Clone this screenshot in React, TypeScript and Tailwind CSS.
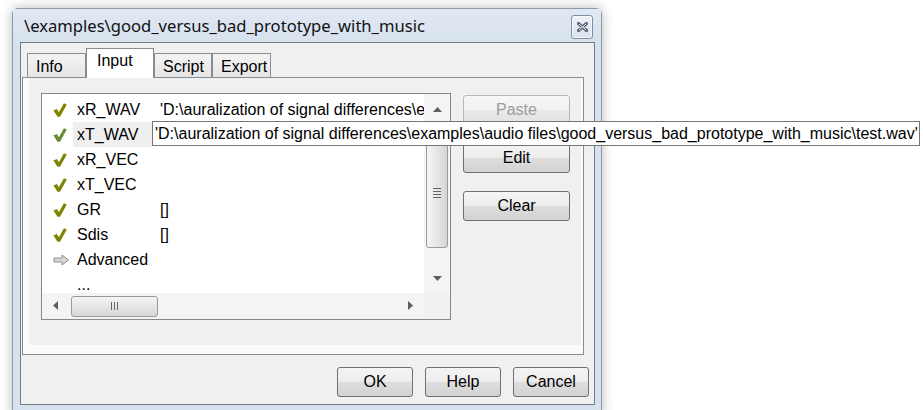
import React from "react";

type Row = {
  icon: "check" | "checkHover" | "arrow" | "none";
  label: string;
  value?: string;
  hover?: boolean;
};

const rows: Row[] = [
  { icon: "check", label: "xR_WAV", value: "'D:\\auralization of signal differences\\examples\\audio files\\good_versus_bad_prototype_with_music\\reference.wav'" },
  { icon: "checkHover", label: "xT_WAV", value: "'D:\\auralization of signal differences\\examples\\audio files\\good_versus_bad_prototype_with_music\\test.wav'", hover: true },
  { icon: "check", label: "xR_VEC" },
  { icon: "check", label: "xT_VEC" },
  { icon: "check", label: "GR", value: "[]" },
  { icon: "check", label: "Sdis", value: "[]" },
  { icon: "arrow", label: "Advanced" },
  { icon: "none", label: "..." },
];

function CheckMark({ color }: { color: string }) {
  return (
    <svg width="14" height="14" viewBox="0 0 14 14">
      <path d="M0.4 7.6 L3.9 6.1 L5.9 9.2 L10.9 0.3 L13.8 1.4 L7 13.7 L4.5 13.8 Z" fill={color} />
    </svg>
  );
}

function OutlineArrow() {
  return (
    <svg width="17" height="12" viewBox="0 0 17 12">
      <path d="M1 4 H9 V1 L15.5 6 L9 11 V8 H1 Z" fill="#d6d6d6" stroke="#8e8e8e" strokeWidth="1" strokeLinejoin="round" />
    </svg>
  );
}

function Tri({ dir }: { dir: "up" | "down" | "left" | "right" }) {
  if (dir === "up")
    return (
      <svg width="9" height="5" viewBox="0 0 9 5">
        <polygon points="0,5 4.5,0 9,5" fill="#5f5f5f" />
      </svg>
    );
  if (dir === "down")
    return (
      <svg width="9" height="5" viewBox="0 0 9 5">
        <polygon points="0,0 4.5,5 9,0" fill="#5f5f5f" />
      </svg>
    );
  if (dir === "left")
    return (
      <svg width="5" height="9" viewBox="0 0 5 9">
        <polygon points="5,0 0,4.5 5,9" fill="#5f5f5f" />
      </svg>
    );
  return (
    <svg width="5" height="9" viewBox="0 0 5 9">
      <polygon points="0,0 5,4.5 0,9" fill="#5f5f5f" />
    </svg>
  );
}

function RowIcon({ kind }: { kind: Row["icon"] }) {
  if (kind === "check") return <CheckMark color="#7f8400" />;
  if (kind === "checkHover") return <CheckMark color="#6a8c36" />;
  if (kind === "arrow") return <OutlineArrow />;
  return null;
}

function Button({
  label,
  disabled,
  wide,
}: {
  label: string;
  disabled?: boolean;
  wide?: boolean;
}) {
  return (
    <div
      className={
        "flex h-[30px] items-center justify-center rounded-[3px] border text-[16px] " +
        (wide ? "w-[107px] " : "w-[76px] ") +
        (disabled
          ? "border-[#b5b9bd] bg-[linear-gradient(#f6f6f6,#f1f1f1_50%,#e9e9e9_50%,#e2e2e2)] text-[#9c9c9c]"
          : "border-[#707070] bg-[linear-gradient(#f4f4f4,#ececec_50%,#dedede_50%,#d2d2d2)] text-black")
      }
    >
      {label}
    </div>
  );
}

function Tab({ label, selected, width }: { label: string; selected?: boolean; width: string }) {
  return (
    <div
      className={
        "flex items-start border-x border-t border-[#898c95] " +
        width +
        (selected
          ? " relative z-10 -mb-px h-[30px] bg-white pl-[10px] pt-[3px]"
          : " h-[24px] bg-[linear-gradient(#f3f3f3,#e6e6e6)] pl-[8px] pt-[4px]")
      }
    >
      <span className="text-[16px] leading-[18px] text-black">{label}</span>
    </div>
  );
}

function VScrollBar() {
  return (
    <div className="flex h-full w-[26px] flex-col bg-[#f4f4f4]">
      <div className="flex h-[27px] items-center justify-center pt-[3px]">
        <Tri dir="up" />
      </div>
      <div className="flex-1 px-[2px] pt-[4px]">
        <div className="flex h-[123px] flex-col items-center justify-center gap-[2px] rounded-[3px] border border-[#9a9a9a] bg-[linear-gradient(90deg,#f5f5f5,#e6e6e6_50%,#d6d6d6)] pt-[12px]">
          <div className="h-px w-[8px] bg-[#666]" />
          <div className="h-px w-[8px] bg-[#666]" />
          <div className="h-px w-[8px] bg-[#666]" />
          <div className="h-px w-[8px] bg-[#666]" />
        </div>
      </div>
      <div className="flex h-[28px] items-center justify-center pb-[2px]">
        <Tri dir="down" />
      </div>
    </div>
  );
}

function HScrollBar() {
  return (
    <div className="flex h-[26px] shrink-0">
      <div className="flex w-[382px] items-center bg-[#f4f4f4]">
        <div className="flex h-full w-[27px] items-center justify-center pb-[2px]">
          <Tri dir="left" />
        </div>
        <div className="ml-[2px] flex h-[21px] w-[87px] items-center justify-center gap-[2px] rounded-[3px] border border-[#9a9a9a] bg-[linear-gradient(#f5f5f5,#e6e6e6_50%,#d6d6d6)]">
          <div className="h-[8px] w-px bg-[#666]" />
          <div className="h-[8px] w-px bg-[#666]" />
          <div className="h-[8px] w-px bg-[#666]" />
        </div>
        <div className="flex-1" />
        <div className="flex h-full w-[28px] items-center justify-center pb-[2px]">
          <Tri dir="right" />
        </div>
      </div>
      <div className="w-[26px] bg-[#f0f0f0]" />
    </div>
  );
}

function ParamList() {
  return (
    <div className="flex h-[227px] w-[410px] flex-col border border-[#828790] bg-white">
      <div className="flex h-[199px] shrink-0">
        <div className="w-[382px] overflow-hidden pt-[3px]">
          {rows.map((r) => (
            <div key={r.label} className="flex h-[25px] items-center whitespace-nowrap text-[16px] text-black">
              <div className="flex w-[31px] shrink-0 items-center pl-[11px]">
                <RowIcon kind={r.icon} />
              </div>
              <div
                className={
                  "flex h-full w-[79px] shrink-0 items-center pl-[4px] " +
                  (r.hover ? "bg-[#efefef]" : "")
                }
              >
                {r.label}
              </div>
              {r.value && !r.hover ? <div className="pl-[8px]">{r.value}</div> : null}
            </div>
          ))}
        </div>
        <VScrollBar />
      </div>
      <HScrollBar />
    </div>
  );
}

function CloseBox() {
  return (
    <div className="mt-[6px] flex h-[24px] w-[22px] items-center justify-center rounded-[3px] border border-[#7f8ea2] bg-[linear-gradient(#eef3f9,#d9e2ed)] shadow-[inset_0_0_0_1px_rgba(255,255,255,0.7)]">
      <svg width="11" height="10" viewBox="0 0 11 10">
        <path d="M1.5 1.5 L9.5 8.5 M9.5 1.5 L1.5 8.5" stroke="#4f5968" strokeWidth="3" strokeLinecap="round" />
        <path d="M2 2 L9 8 M9 2 L2 8" stroke="#f5f7fa" strokeWidth="1" strokeLinecap="round" />
      </svg>
    </div>
  );
}

export default function App() {
  return (
    <div className="relative h-[410px] w-[923px] overflow-hidden bg-white font-['Liberation_Sans',Arial,sans-serif]">
      <div className="ml-[12px] mt-[8px] flex h-[408px] w-[590px] flex-col rounded-t-[6px] border border-[#8c9aab] bg-[#d8e2ee] shadow-[0_0_12px_rgba(0,0,0,0.28)]">
        {/* caption */}
        <div className="flex h-[33px] shrink-0 items-start justify-between bg-[linear-gradient(#dfe8f3,#d8e2ee)] pl-[11px] pr-[8px]">
          <span className="mt-[6px] font-['Noto_Sans',sans-serif] text-[16.6px] leading-[22px] text-[#111]">
            \examples\good_versus_bad_prototype_with_music
          </span>
          <CloseBox />
        </div>

        {/* client area */}
        <div className="ml-[7px] mr-[6px] flex h-[363px] shrink-0 flex-col border border-[#6f7c8c] bg-[#f0f0f0]">
          <div className="ml-px mt-[6px] w-[562px]">
            <div className="flex h-[28px] items-end pl-[5px]">
              <Tab label="Info" width="w-[59px]" />
              <Tab label="Input" width="w-[68px]" selected />
              <Tab label="Script" width="w-[58px]" />
              <Tab label="Export" width="w-[59px]" />
            </div>
            <div className="h-[278px] border border-[#898c95] bg-[#fbfbfb] pb-[9px] pl-[6px] pr-[2px]">
              <div className="flex h-full bg-[#f0f0f0] pl-[12px] pt-[15px]">
                <ParamList />
                <div className="ml-[12px] flex flex-col gap-[18px] pt-[2px]">
                  <Button label="Paste" disabled wide />
                  <Button label="Edit" wide />
                  <Button label="Clear" wide />
                </div>
              </div>
            </div>
          </div>
          <div className="mt-[12px] flex justify-end gap-[12px] pr-[5px]">
            <Button label="OK" />
            <Button label="Help" />
            <Button label="Cancel" />
          </div>
        </div>
      </div>

      {/* full-value tooltip shown for the hovered row */}
      <div className="absolute left-[152px] top-[121px] flex h-[25px] w-[768px] items-center border border-[#767676] bg-white pl-[2px] text-[16px] whitespace-nowrap text-black">
        'D:\auralization of signal differences\examples\audio files\good_versus_bad_prototype_with_music\test.wav'
      </div>
    </div>
  );
}
